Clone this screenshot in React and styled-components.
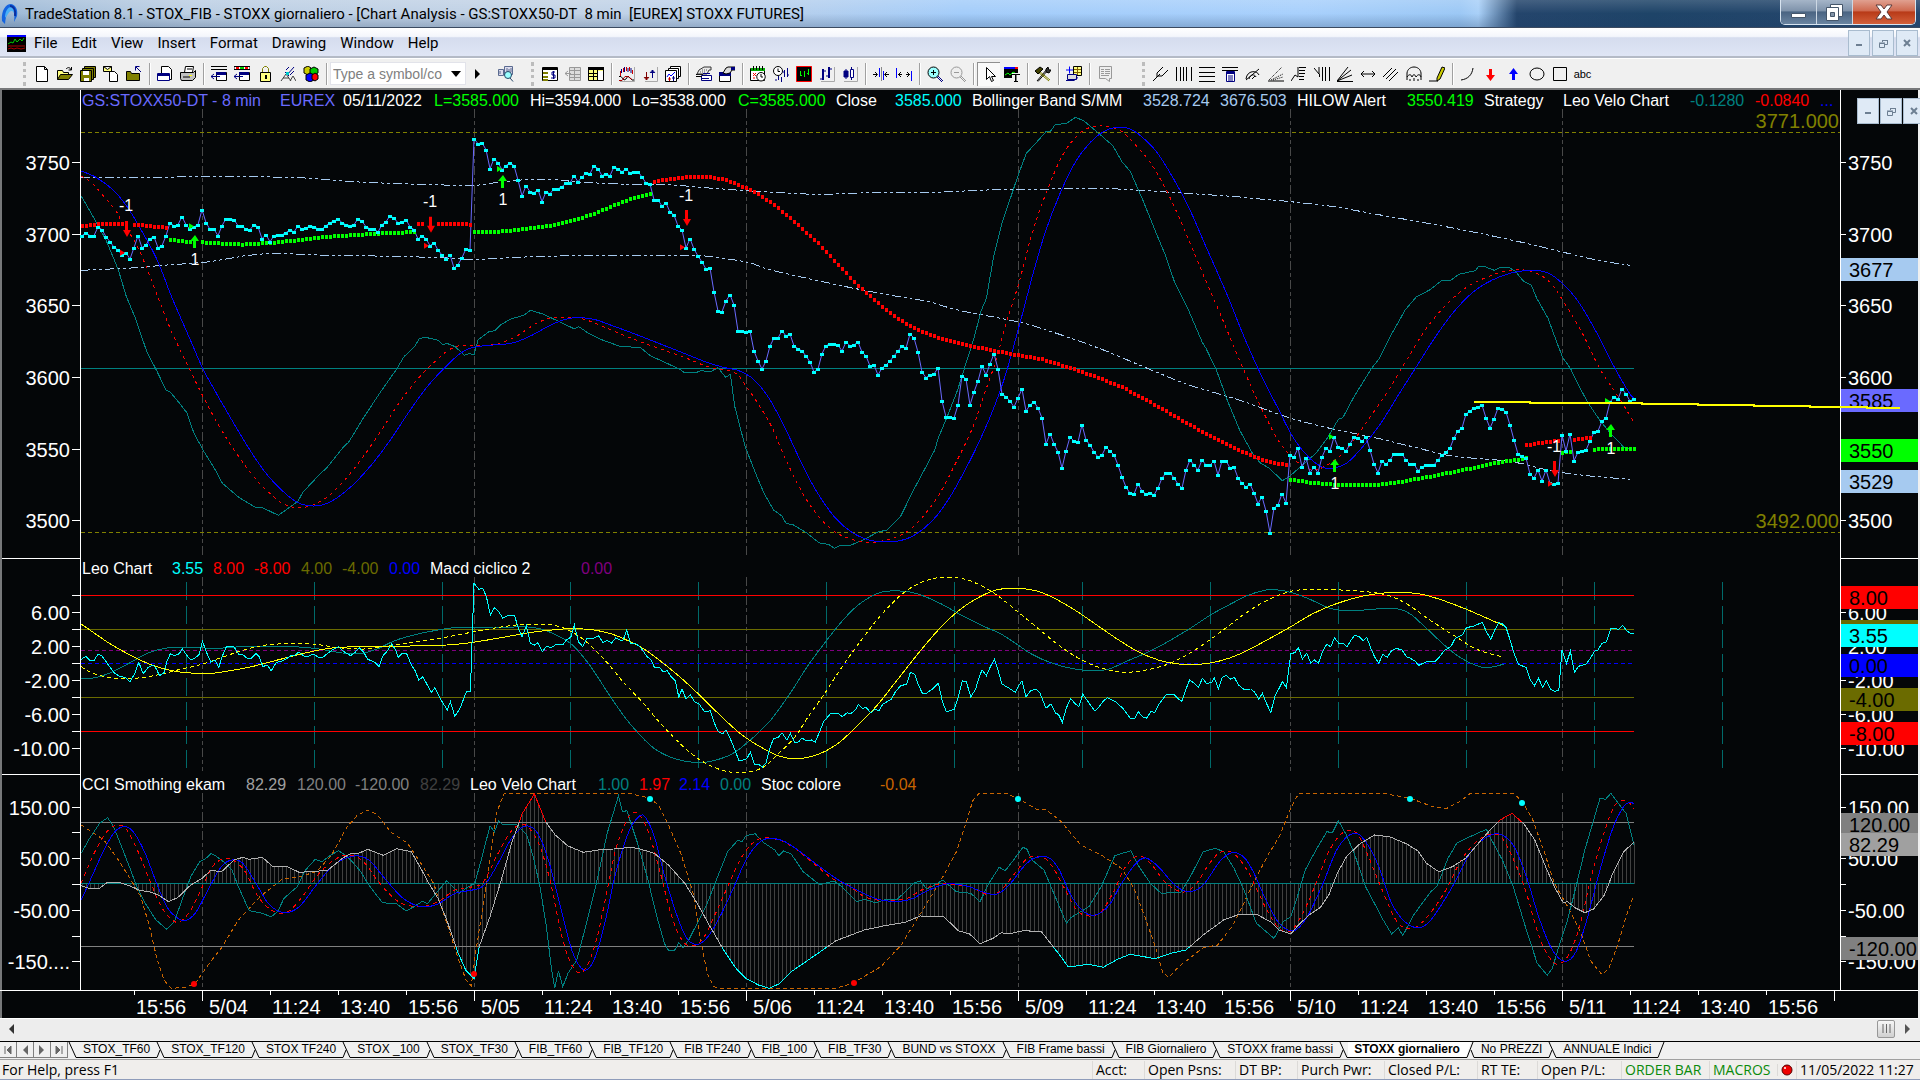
import React from 'react';
import styled, { createGlobalStyle } from 'styled-components';

/* ---------- data ---------- */

// one sample per bar, three units per pixel, counted from the top of the price pane
const CLOSE = [
  437, 428, 437, 437, 411, 419, 440, 455, 472, 480, 495, 488, 507, 473, 437, 473, 464, 446, 440, 473,
  467, 437, 398, 408, 404, 380, 404, 418, 411, 404, 359, 398, 418, 418, 437, 407, 386, 386, 389, 407,
  407, 418, 419, 404, 410, 446, 434, 455, 437, 434, 434, 428, 419, 426, 407, 417, 415, 407, 410, 417,
  417, 407, 398, 394, 386, 398, 404, 407, 404, 386, 394, 410, 416, 417, 426, 404, 395, 377, 385, 398,
  397, 389, 410, 419, 447, 437, 446, 467, 458, 480, 495, 507, 494, 534, 524, 503, 476, 480, 146, 161,
  158, 179, 236, 206, 218, 239, 227, 218, 227, 270, 318, 287, 305, 308, 299, 335, 305, 311, 296, 296,
  290, 279, 279, 257, 275, 261, 248, 251, 227, 236, 257, 251, 257, 230, 237, 245, 237, 248, 245, 245,
  261, 279, 282, 329, 330, 348, 339, 366, 375, 408, 420, 474, 446, 477, 498, 516, 537, 534, 606, 663,
  665, 633, 614, 645, 723, 723, 726, 723, 783, 813, 837, 813, 768, 744, 744, 722, 738, 732, 768, 776,
  783, 798, 816, 846, 837, 791, 767, 762, 762, 765, 783, 756, 767, 765, 756, 786, 798, 828, 825, 855,
  834, 825, 813, 798, 783, 768, 774, 732, 744, 786, 846, 863, 855, 852, 834, 933, 981, 981, 984, 945,
  857, 867, 945, 906, 873, 828, 855, 822, 791, 837, 912, 920, 933, 951, 924, 897, 963, 945, 936, 954,
  984, 1062, 1031, 1062, 1086, 1134, 1083, 1041, 1053, 1056, 1004, 1050, 1065, 1086, 1101, 1095, 1071, 1083, 1095, 1125,
  1161, 1191, 1210, 1212, 1182, 1203, 1212, 1209, 1215, 1194, 1164, 1149, 1149, 1164, 1182, 1194, 1140, 1110, 1125, 1140,
  1110, 1125, 1125, 1113, 1155, 1112, 1112, 1134, 1131, 1164, 1179, 1191, 1182, 1209, 1241, 1220, 1263, 1329, 1254, 1245,
  1211, 1239, 1095, 1101, 1074, 1131, 1104, 1148, 1131, 1148, 1101, 1074, 1083, 1041, 1071, 1074, 1083, 1062, 1041, 1044,
  1053, 1041, 1080, 1122, 1148, 1113, 1122, 1110, 1092, 1092, 1092, 1110, 1122, 1122, 1142, 1131, 1125, 1125, 1125, 1110,
  1095, 1086, 1074, 1044, 1022, 1014, 972, 963, 954, 951, 945, 984, 1014, 987, 954, 957, 966, 1005, 1050, 1092,
  1098, 1104, 1152, 1164, 1140, 1173, 1140, 1179, 1182, 1179, 1035, 1083, 1032, 1112, 1086, 1083, 1080, 1053, 1026, 1023,
  993, 984, 936, 921, 927, 896, 912, 933, 927,
];

// "bar,level" pairs
const VELO_SLOW = '-0.2,243 3.5,262 7.6,298 11.1,347 14.7,418 18.8,510 22.4,620 26.9,745 30.3,838 33.6,910 37.7,995 41.7,1075 45.8,1147 49.9,1200 53.5,1235 56.5,1247 60.1,1245 63.7,1224 67.8,1184 72.4,1124 76.9,1053 81.5,970 86.1,893 90.7,833 94.3,793 97.4,773 101.9,766 107.6,759 112.1,738 116.7,708 120.8,688 123.9,683 128,688 132.6,707 140,740 150.5,790 156.9,820 161.1,834 164.2,842 167.9,868 171.6,922 175.8,1015 180.5,1135 184.2,1215 188.4,1285 192.6,1328 196.8,1350 200,1355 203.7,1354 207.9,1337 212.6,1292 216.8,1225 221,1135 224.7,1045 227.9,955 231,850 234.7,690 237.9,545 241,420 244.7,305 248.4,215 252.1,157 255.2,126 258.4,112 261.6,115 264.2,133 268.4,182 272.6,260 276.8,355 281,470 286.3,615 290.5,740 294.5,848 299,955 302.9,1045 306.8,1103 310.2,1132 313,1134 316.3,1118 320.2,1070 324.7,1000 329.1,915 333.6,830 338.1,745 342.5,672 347.6,608 352.6,570 357.6,548 362.6,541 366.5,549 369.9,578 373.8,630 378.3,720 382.7,823 386.6,905 388,925';
const VELO_MID = '-0.2,258 2.5,280 5.5,320 8.6,365 10.1,400 13.2,455 15.7,520 18.8,615 22.4,725 26.4,825 30.5,925 34.6,1015 39.2,1100 43.8,1172 47.9,1220 50.9,1245 54.5,1253 58.1,1243 61.6,1218 65.7,1170 70.3,1100 74.9,1020 79.5,935 84.1,865 88.2,815 91.7,780 94.8,766 98.9,767 101.9,766 105.5,755 109.1,735 113.2,703 116.7,686 120.8,682 124.9,686 129,703 133.6,727 140,757 150.5,802 156.9,832 163.2,848 165.8,885 169.5,950 172.6,1015 175.8,1105 179.5,1195 183.2,1265 187.4,1318 191.6,1345 196.8,1358 201,1350 205.3,1332 209.5,1290 214.2,1215 218.4,1120 222.6,1015 225.2,925 228.4,815 231,700 234.2,580 237.3,440 241,310 245.2,195 249.4,130 253.1,109 256.3,109 260,125 263.6,168 267.3,222 271.5,310 275.8,425 280,545 284.5,670 287.8,765 292.3,890 295.7,975 299,1050 302.4,1100 305.7,1132 308.5,1139 311.3,1125 314.6,1097 318,1050 322.4,975 326.9,895 331.4,805 336.4,710 341.4,640 346.4,590 351.5,560 355.9,543 360.4,540 363.7,550 367.1,578 370.4,635 374.9,725 379.4,835 383.8,915 388,997';
const VELO_FAST = '-0.2,318 3.5,395 6,450 9.1,540 11.1,620 13.2,680 16.2,785 18.8,845 21,900 22,905 24.4,940 26.2,968 28,1030 30.5,1085 33.1,1135 35.1,1180 39.2,1222 43.3,1252 45.3,1254 49.1,1276 54,1234 55.2,1207 59.1,1157 61.3,1132 65.2,1073 66.7,1056 70.3,985 74.4,910 78.5,840 80.5,800 83.1,770 84.3,747 85.6,741 89,751 90.2,765 91.2,760 93.3,770 95.6,796 96.8,791 98,794 99,750 101.6,726 103.2,722 104.5,706 107,688 110.6,675 112.1,661 115.2,672 118.8,692 123,716 124.2,710 126.9,732 130.5,752 134.8,770 139.5,772 142.1,797 144.8,812 149.5,838 150.5,847 153.2,849 154.8,842 157.1,845 159,833 160.9,862 162.1,853 163.2,950 165.8,1070 168.4,1150 170.5,1210 172.9,1260 175,1278 176,1300 177.9,1305 181.1,1328 184.2,1358 186.8,1364 188.1,1375 189.5,1366 192.1,1366 195.3,1350 199,1326 201.3,1320 204.7,1278 207.9,1200 211,1130 213.1,1082 214.2,1040 216.3,980 218.9,900 221,820 223.1,740 224.7,665 226.1,625 227.9,500 230,400 232.1,325 234.2,250 236.1,190 238.4,160 241,125 242.1,124 243.3,104 246.1,100 248.4,82 250.5,93 253.7,125 257.7,167 260,215 262.1,245 265.2,330 268.4,425 271,500 273.1,575 276.8,665 280,755 281,775 283.6,840 286.3,930 289.4,1020 292.6,1090 294.5,1118 296.8,1135 300.1,1172 302.1,1157 305.1,1125 308.5,1090 311.3,1045 314.1,988 315.2,983 318,920 322.4,835 324.2,808 327.5,730 330.8,660 333.6,620 336.9,600 340,571 342.2,571 344.2,553 348.3,542 349.2,529 350.9,531 353.1,541 354.6,532 356.8,533 358.5,545 360.2,572 362.3,585 363.7,625 366.5,685 368.8,760 370.2,803 372.1,835 374.3,890 376.6,940 379.4,990 382.7,1038 385.5,1072 387,1076';
const BAND_UP = '-0.2,262 20.3,262 30,259 54,263 69.3,276 87.7,284 97.9,286 103.5,278 112.1,268 118.3,269 125.4,277 139.5,284 147.4,285 155.8,293 166.3,302 183.2,313 194.7,309 212.6,307 226.3,300 239,298 247.3,295 258.9,297 274.7,309 287.3,319 294.5,327 301.2,334 312.4,349 323.6,373 337,401 348.1,427 360.4,458 370.4,487 379.4,512 387,526';
const BAND_DOWN = '-0.2,541 12.2,534 20.3,526 30.5,517 36.6,506 41.7,496 48.9,490 59.1,495 77.5,499 89.7,503 97.9,508 107.1,503 115.2,499 125.4,497 139.5,496 148.4,496 155.8,498 163.2,510 167.4,520 171.6,538 182.1,567 192.6,594 203.2,618 211.6,635 218.9,660 230.5,687 236.8,704 247.3,745 255.8,782 266.3,835 276.8,885 285.2,915 291.2,938 301.2,981 311.3,1013 323.6,1044 333.6,1073 342.5,1098 353.7,1110 360.4,1122 367.1,1142 377.1,1158 387,1168';

const HILOW = [
  ['#f00', '0,408 5,402 10,402'],
  ['#f00', '13,404 21,413'],
  ['#0f0', '22,449 27,456'],
  ['#0f0', '30,457 35,461 40,464 44,461 49,457 55,449 61,441 67,436 73,431 83,426'],
  ['#f00', '84,402 85,402'],
  ['#f00', '89,402 96,402 97,405'],
  ['#0f0', '98,426 104,425 110,418 117,408 122,393 127,376 132,351 137,328 142,311'],
  ['#f00', '143,275 147,267 152,261 157,261 161,270 166,295 169,312 173,345 178,395 184,460 189,525 194,588 199,640 204,688 209,720 215,748 221,765 227,780 233,794 240,808 247,834 254,863 260,892 267,937 274,985 281,1032 288,1075 295,1110 301,1126'],
  ['#0f0', '302,1169 307,1178 313,1184 319,1186 324,1185 329,1177 336,1162 345,1141 352,1122 361,1105'],
  ['#f00', '361,1066 364,1060 369,1053'],
  ['#f00', '373,1049 377,1043'],
  ['#0f0', '370,1088 372,1085'],
  ['#0f0', '378,1079 383,1076 388,1076'],
];

const LEO = '-0.2,328 1,319 2,332 3,332 4,312 5,318 6.6,345 8,368 9.3,378 11,383 12,396 13.2,370 14.2,337 15.3,371 16.4,354 17.7,345 18.5,355 19.4,377 20.5,368 21.3,332 22.1,311 23.2,317 24.3,311 25.1,297 26.2,316 27.2,330 28.5,322 29.3,313 30.1,274 31.2,309 32.2,336 33.2,330 34.2,352 35.1,318 36.1,290 38,290 39.1,312 40.2,314 41.3,325 42.4,324 43.5,310 44.3,320 45.2,350 46.3,345 47.3,362 48.6,337 49.8,334 51,327 52.1,318 53.1,317 54.2,306 55.4,318 56.7,319 57.8,312 59,321 60.3,321 61.4,310 62.8,298 64.2,290 65.1,302 66.2,310 67.1,317 68.2,308 69.3,293 70.4,306 71.4,328 72.5,333 73.4,339 74.3,350 75.2,318 76.3,303 77.4,281 78.4,300 79,322 80.1,310 81.2,312 82.3,344 83.3,362 84.2,391 85.2,380 86.3,404 87.3,428 88.2,413 89.3,440 90.2,458 91.3,480 92.1,455 93.2,499 94.4,478 95.3,450 96.1,425 97.1,424 98,100 99.2,118 100.2,115 101.1,140 102.1,195 103.1,173 104.2,185 105.2,205 106.3,197 108.1,196 109.1,235 110,260 111.1,228 112.1,280 113.1,285 114,278 115.1,305 116.2,288 117.2,294 118.3,285 120.2,284 121.1,270 122.2,262 123.1,225 124.1,275 125.2,290 126.2,265 128.1,264 129.1,257 130.2,277 131.3,272 132.4,279 133.4,264 134.5,270 135.2,272 136.2,240 137.1,280 138.3,280 139.5,290 141.3,320 142.3,330 143.1,352 144.3,352 145.3,365 146.3,362 147.4,382 148.3,392 149.2,441 150,417 151,447 152.1,434 153.1,455 154.3,462 155.6,485 157.1,482 158.1,520 159.1,545 160.2,551 161,540 162.2,570 163.4,605 164.2,631 165.2,630 166.2,626 167.1,606 168.1,642 169.1,643 170.1,651 171,638 171.8,600 172.9,565 174,563 175,548 176.2,570 177.1,550 178.2,578 179.1,576 180,564 181,572 182.4,570 183.3,577 184.4,545 185.4,515 187.2,490 189.2,492 190.1,500 191.3,488 192.2,491 193.3,480 194.1,464 195.1,475 196.1,473 197.2,489 198.3,477 199.2,483 200.2,463 202.3,448 203.3,427 204.6,408 206.2,402 207.1,367 208.2,373 209.1,405 210.1,430 211.1,430 212.5,418 214.1,400 215.1,455 216.1,485 218.1,478 219.1,440 220.1,392 221.1,396 222.2,440 223.4,418 224.2,385 225,360 226.1,377 227.1,350 228.1,328 229,360 230,402 231.8,415 233.3,427 234,410 235,392 236,440 237.2,422 238.5,418 239.5,430 241,475 242.2,462 243.4,490 244.1,493 245.1,517 246.1,473 247.2,446 248.2,460 249.2,470 250.2,432 251.2,450 252.3,468 253.2,483 254.2,472 255.2,455 256.3,443 258.4,455 260.2,475 262.2,507 263.2,505 264.1,485 265.1,500 266.1,505 267.2,485 268.2,487 269.2,463 271.1,433 273,433 274,446 275,454 276,417 276.9,390 278,399 279.1,412 280.1,385 281.1,400 282.4,398 283.1,384 284.1,416 285.1,382 286,376 287.2,388 288.1,382 289.1,405 290.5,418 292.2,417 293.2,427 294.2,448 295.1,430 296.1,460 297.2,487 298.2,440 300.1,395 301.1,413 302.2,311 303.2,308 304.1,293 305.1,327 306.2,310 307.2,340 308.1,330 309.1,340 310.1,305 311.2,283 312.2,290 313.1,263 314.2,280 315.3,280 316.2,291 317.3,270 318.2,256 319.3,260 320.3,272 321.2,262 322.2,295 323.2,322 324.2,340 325.2,313 326.3,322 327.4,302 328.5,295 330,300 331.1,320 332.1,325 333.2,333 334.2,346 336.1,335 338.2,335 339.4,320 340.5,302 342.2,290 343.3,265 345.1,255 346.1,233 348,228 350.1,217 351.1,245 352.2,268 353.2,240 354.2,217 355.1,222 356,232 356.9,265 358,310 359.1,343 361.1,353 362.1,390 363.1,407 364.1,385 365.2,412 366.1,392 367.1,417 368.1,424 369.2,421 370,300 371.1,340 372.1,304 373.1,367 374.1,349 376,343 377.1,325 378.2,303 379,300 380,280 381.1,276 382.2,235 383.2,234 384.1,239 385.1,226 386.2,242 387.1,250 388,250';
const MACD_SLOW = '-0.2,222 2.8,247 6.6,278 12,315 17.4,345 22.9,363 27.2,369 31.5,371 37,362 42.4,350 48.9,330 55.4,310 61.9,295 68.4,290 77.1,289 91.2,285 97.7,277 105.3,262 111.8,248 118.3,239 122.6,236 128,240 132.4,252 136.7,273 140.5,297 144.6,333 149.7,383 154.8,440 159.9,500 165,555 170.1,594 174.2,618 178.8,626 183.4,616 188.5,585 193.6,530 198.7,467 203.8,390 209.9,298 215,228 220.1,173 225.2,136 229.3,118 234.4,115 239,124 243.6,148 248.7,184 253.8,226 258.9,268 264,305 269.1,330 274.2,342 279.3,343 284.4,333 289.5,312 295,278 302.2,230 307.9,190 313.4,162 319.9,139 327.4,127 334,131 339.4,148 345.9,177 351.3,205 356,230';
const MACD_MID = '-0.2,350 2.8,370 7.7,384 13.1,385 18.5,376 23.9,360 29.9,343 34.8,323 40.2,301 45.6,286 51,281 57.6,282 64.1,293 70.6,297 77.1,287 83.6,276 91.2,261 97.7,246 104.2,232 109.6,224 116.1,223 120.4,234 124.8,263 128,297 131.3,338 135.6,400 140,455 144.6,520 149.7,583 154.8,632 159.9,660 165,668 170.1,653 174.2,610 178.3,560 181.3,505 185.4,435 189.5,360 193.6,290 197.7,225 201.7,170 205.8,125 209.9,97 214,83 219.1,84 223.2,98 228.3,132 233.4,180 239.5,240 245.6,298 251.7,340 256.8,360 260.9,367 266,360 271.1,344 276.2,315 281.3,275 286.4,230 290.5,193 294.9,160 299.3,135 303.6,121 309,118 317.7,122 324.2,130 328.5,145 332.9,175 337.2,212 343.7,262 349.1,300 355.6,322';
const MACD_FAST = '-0.2,385 3.4,383 7.7,365 12,338 16.4,310 20.7,295 26.1,292 33.7,295 40.2,290 50,289 55.4,292 59.7,298 65.1,309 69.5,311 73.8,297 78.2,272 83.6,253 90.1,238 94.4,232 103.1,234 110.7,230 115,238 119.4,260 122.6,285 126.9,345 131.3,425 135.6,500 139.7,558 143.6,600 148.7,628 153.8,638 157.9,632 162.5,612 167.1,570 172.2,510 177.3,425 181.3,350 185.9,275 190.5,207 194.6,160 199.7,127 205.8,124 209.9,136 215,163 220.1,197 225.2,228 229.3,249 233.4,280 237.5,313 242.6,340 247.7,356 252.8,362 256.8,357 260.9,335 267.1,303 272.2,270 277.3,233 282.4,193 287.5,160 291.5,136 295.6,121 298.5,119 302.5,128 306.8,147 312.3,176 317.7,182 327.4,175 331.8,190 336.1,235 341.5,295 345.9,332 350.8,353 355.6,342';

const CCI = '-0.2,1007 1.7,1015 4.2,1016 6.1,999 9.3,997 12,1008 14.2,1020 17.4,1027 19.4,1037 21.6,1055 23.9,1043 27.2,1005 30.1,984 32.1,962 35,964 38,930 40.2,922 41.8,928 45.1,922 47.8,951 51,948 54.3,967 57,965 61.4,961 65.1,925 67.1,911 69.3,909 71.4,898 75.3,916 78.7,896 82.3,905 84.7,955 86.8,1002 89,1045 91.2,1110 93.9,1205 96,1262 98,1286 99.3,1190 102,1100 104.7,995 107.4,880 110.1,790 113.1,732 115.9,815 118.3,855 121.5,888 125.3,907 129.1,900 132.9,897 137.2,892 139.5,897 143.1,910 146.6,945 150.7,1000 153.8,1060 156.8,1125 160.4,1200 163.5,1255 166,1285 169.1,1305 171.8,1315 174.2,1302 177.3,1265 183.4,1215 188.5,1172 195.6,1140 200.7,1127 205.8,1117 209.6,1098 215.5,1101 219.1,1142 221.9,1152 224.5,1181 227.8,1165 229.8,1148 231.8,1152 234.9,1143 236.4,1141 237.5,1146 239.7,1143 242.6,1187 244.6,1218 246.6,1251 251.7,1243 255.3,1252 258.9,1228 262,1213 268.3,1226 272.2,1210 276,1200 280.3,1155 285.4,1110 289.5,1092 293.8,1094 297.1,1115 299.3,1140 302.2,1152 304.1,1125 306.8,1095 309.6,1072 311.7,1035 313.9,968 316.1,920 319.3,883 323.1,855 326.9,860 331.2,882 334,903 336.1,940 339.2,965 342.6,950 345.9,925 349.1,880 352.4,835 354.5,810 357.5,790 360.5,822 363.2,870 365.9,950 368.1,1010 370.3,1058 371.4,1055 373.5,1075 375.7,1088 377.9,1077 380.6,1035 382.7,970 385.4,905 388,877';
const CYCLE_FAST = '-0.2,910 1.9,865 4.4,820 6.4,803 7.9,830 9.9,890 12,955 13.7,1010 15.8,1060 18.5,1110 21.2,1138 23.1,1115 25,1050 27.2,980 29.4,935 31,925 32.3,910 33.7,920 35.9,940 37.5,960 39.1,1010 41.8,1082 44.5,1088 47.3,1100 48.9,1085 50.5,1045 53.8,1010 55.9,960 58.3,928 60,935 61.9,918 64.1,902 66.2,918 67.9,940 69.5,962 71.7,1005 75.1,1058 78.7,1062 81,1083 83,1070 85.2,1053 86.3,1062 88.5,1030 91.2,992 94.4,1030 96.6,1010 98.2,1000 99.8,930 102,828 103.1,845 104.2,812 105.3,825 108.5,822 111.2,855 112.8,920 114.5,1010 116.1,1130 117.4,1260 118.2,1315 119.1,1262 120.2,1310 121.5,1270 123.7,1230 125.9,1130 128.6,1000 131.3,850 134.1,738 135.1,785 136.2,782 138.9,880 141.5,990 143.6,1095 145.6,1180 146.6,1201 148.2,1200 149.2,1178 150.2,1193 151.7,1170 153.8,1120 156.3,1060 158.9,980 161.4,905 164,870 165,875 166,857 168.3,851 170.1,875 173.2,900 174.2,917 175.4,903 177.3,912 180.3,965 184.4,1004 188,993 190,1010 193.6,1055 195.6,1048 198.4,1058 200.7,1049 203.8,1048 205.8,1025 207.9,1000 209.6,993 211.2,1017 213.5,1003 215.2,990 218.6,1025 222.2,1030 224.5,1055 226.7,1000 229.3,952 230.8,962 232.9,930 235.2,892 236.2,897 237.5,930 240.5,960 242.6,1020 246.1,1120 247.2,1103 251.7,1070 254.8,1010 258.2,917 262.2,902 264,945 267.1,1000 269.9,1031 272.2,1027 274.7,1028 277.3,975 280.3,905 283.4,895 285.4,905 288,955 290.5,1020 293.6,1120 298,1165 300.3,1115 302.2,1100 303.6,1050 305.8,960 308.5,900 311.2,845 312.6,848 314.1,812 316.1,855 318.2,915 320.9,1010 323.1,1060 325.3,1110 327.4,1152 329.1,1133 330.2,1157 332.9,1095 337.2,1025 338.8,1008 341.5,925 343.7,880 347,860 351.1,838 352.4,870 355.1,930 357.8,1010 361.1,1140 363.8,1240 366.3,1276 367.6,1255 369.2,1190 371.4,1110 373.5,1010 375.7,900 377.9,810 379.5,745 380.9,748 382.2,730 383.8,755 386,790 388,885';
const CYCLE_MID = '-0.2,1000 1.7,945 3.9,890 6.6,840 9.3,825 11.5,845 14.2,910 16.9,990 19.6,1065 22.3,1108 24.5,1115 27.2,1080 29.9,1015 32.6,950 35.3,927 38,932 40.8,965 43.5,1030 46.2,1070 49.4,1090 52.1,1080 55.4,1035 58.6,980 61.9,940 65.1,918 68.4,919 71.1,945 73.8,990 77.1,1035 80.3,1062 84.7,1070 89,1055 93.3,1020 97.7,1010 100.4,995 103.6,920 106.9,850 109.6,823 111.8,835 114.5,890 117.2,1000 119.4,1130 121.5,1220 123.7,1265 125.9,1255 128.6,1170 131.3,1020 133.4,900 136.2,810 138,787 140,805 142,860 144.6,970 147.2,1090 149.7,1165 152.3,1188 155.3,1165 158.4,1090 161.4,1010 164.5,930 167.6,880 170.6,864 174.7,872 178.8,900 183.4,945 187.5,985 191.5,1005 195.6,1040 199.7,1051 205.8,1047 209.9,1020 214,1003 218.1,1004 222.2,1012 226.2,1033 229.3,1025 232.9,975 236.4,925 240,921 242.6,950 245.6,1015 248.7,1080 251.7,1098 254.8,1085 257.9,1025 260.9,950 264,918 267.1,940 271.1,1000 275.2,1026 278.3,1005 281.9,940 284.9,905 288,912 291.5,965 296,1075 299.3,1135 302.2,1143 305.2,1090 308.5,1000 311.7,905 315,850 318.2,845 320.9,900 324.7,1010 328.5,1110 331.8,1137 335.6,1110 340.5,1030 344.8,930 349.1,870 352.4,853 355.1,865 358.3,940 361.1,1030 364.3,1160 367,1225 369.2,1242 371.9,1210 374.6,1120 377.3,980 380.6,845 383.3,765 386,752 388,775';
const CYCLE_SLOW = '-0.2,1050 1.7,1000 5.5,900 8.2,845 10.9,830 13.1,850 15.8,910 18.5,995 21.2,1070 23.4,1100 25.6,1112 28.3,1090 31.5,1020 34.8,950 37.5,930 40.2,940 43.5,1000 46.7,1062 50.5,1088 54.3,1070 58.6,1005 63,945 67.9,918 71.7,930 76,990 80.3,1045 84.7,1070 89,1062 93.3,1030 99.8,1012 103.1,960 107.4,865 110.9,828 113.9,850 116.6,930 119.4,1060 122.6,1205 125.5,1260 128,1230 130.7,1120 133.4,970 136.7,845 139.4,798 141,805 143.1,860 145.6,975 148.7,1095 151.2,1165 154,1183 156.8,1155 159.9,1090 163,1010 166,930 169.1,880 171.8,865 175.7,875 180.3,912 184.4,950 189.5,993 194.6,1025 199.7,1050 206.3,1051 210.9,1025 216,1002 221.1,1008 226.2,1030 228.8,1032 231.8,1005 235.4,950 238,925 241.5,922 244.1,955 247.2,1035 250.2,1083 253.3,1095 256.8,1065 259.9,1000 263.5,940 266,924 269.1,950 273.2,1005 276.7,1025 280.3,1005 284.4,935 287.5,908 290.5,922 292.8,965 296,1050 299.3,1120 303,1142 306.3,1100 310.1,1005 313.9,895 317.9,850 320.9,875 324.2,950 327.4,1060 330.7,1115 334,1133 337.2,1110 342.6,1010 347,910 351.3,860 354.5,853 357.8,885 361.1,980 364.3,1105 367.6,1200 370.8,1234 373.5,1205 376.2,1110 379.5,960 382.7,835 385.4,770 387,757 388,762';
const STOC = '-0.2,825 2.3,845 5.5,870 8.8,925 12,985 14.7,1040 16.9,1130 18.7,1225 20.5,1290 22.3,1315 26.1,1312 28.3,1300 31.5,1245 34.8,1195 39.1,1110 44.5,1040 50,988 54.3,980 58.6,965 62.4,915 66.2,832 68.9,795 71.4,781 73.8,793 77.1,845 81.4,880 84.7,940 87.9,1000 91.2,1120 93.9,1220 96,1290 97.3,1308 98.5,1200 100.4,1060 102,930 103.6,790 105.5,731 137.2,731 142,745 144.1,765 146.6,825 149.7,910 152.8,1030 154.8,1180 156.3,1270 157.9,1310 159.4,1315 188.5,1315 192.6,1300 199.7,1250 204.8,1185 209.9,1085 215,985 218.6,905 221.1,815 222.7,752 224.2,731 231.3,731 234.4,748 238.5,777 241,779 244.6,812 249.7,885 254.8,915 259.9,955 263,1015 266,1110 268.6,1200 270.1,1265 271.6,1283 274.2,1250 280.3,1193 283.9,1185 287.5,1130 290.5,1058 292.8,1000 296.5,915 299.3,860 302.2,775 304.1,731 325.8,731 332.1,745 337.2,768 341,776 344.2,757 347,731 357.8,731 360,752 362.7,810 365.4,900 368.1,1000 371.9,1080 374.6,1145 377.3,1235 380,1274 381.7,1255 383.8,1190 386,1100 388,1035';

const DAYS = [30, 98, 166, 234, 302, 370];
const LAST_BAR = 388;

const HEADER = [
  ['GS:STOXX50-DT - 8 min', '#6a6aff', 198],
  ['EUREX', '#6a6aff', 63],
  ['05/11/2022', '#fff', 91],
  ['L=3585.000', '#0f0', 96],
  ['Hi=3594.000', '#fff', 102],
  ['Lo=3538.000', '#fff', 106],
  ['C=3585.000', '#0f0', 98],
  ['Close', '#fff', 59],
  ['3585.000', '#0ff', 77],
  ['Bollinger Band S/MM', '#fff', 171],
  ['3528.724', '#a6caf0', 77],
  ['3676.503', '#a6caf0', 77],
  ['HILOW Alert', '#fff', 110],
  ['3550.419', '#0f0', 77],
  ['Strategy', '#fff', 79],
  ['Leo Velo Chart', '#fff', 127],
  ['-0.1280', '#008080', 65],
  ['-0.0840', '#f00', 65],
  ['...', '#00f', 14],
];
const LEO_HEADER = [
  ['Leo Chart', '#fff', 90],
  ['3.55', '#0ff', 41],
  ['8.00', '#f00', 41],
  ['-8.00', '#f00', 47],
  ['4.00', '#6b6b00', 41],
  ['-4.00', '#6b6b00', 47],
  ['0.00', '#00f', 41],
  ['Macd ciclico 2', '#fff', 151],
  ['0.00', '#800080', 40],
];
const CCI_HEADER = [
  ['CCI Smothing ekam', '#fff', 164],
  ['82.29', '#a0a0a0', 51],
  ['120.00', '#808080', 58],
  ['-120.00', '#808080', 65],
  ['82.29', '#404040', 50],
  ['Leo Velo Chart', '#fff', 128],
  ['1.00', '#008080', 41],
  ['1.97', '#f00', 40],
  ['2.14', '#00f', 41],
  ['0.00', '#008080', 41],
  ['Stoc colore', '#fff', 119],
  ['-0.04', '#c86400', 50],
];

const PRICE_TICKS = [[217, '3750'], [433, '3700'], [647, '3650'], [862, '3600'], [1078, '3550'], [1291, '3500']];
const PRICE_TAGS = [
  [504, '3677', '#a6caf0'],
  [897, '3585', '#6a6aff'],
  [1047, '3550', '#0f0'],
  [1140, '3529', '#a6caf0'],
];
const LEO_TICKS = [[136], [187, '6.00'], [238], [289, '2.00'], [340], [391, '-2.00'], [442], [493, '-6.00'], [544], [595, '-10.00']];
// the 4.00 tag is almost hidden by 3.55, only its edge shows
const LEO_TAGS = [
  [108, '8.00', '#f00'],
  [210, '', '#6b6b00'],
  [222, '3.55', '#0ff'],
  [312, '0.00', '#00f'],
  [414, '-4.00', '#6b6b00'],
  [516, '-8.00', '#f00'],
];
const CCI_TICKS = [[772, '150.00'], [848], [925, '50.00'], [1003], [1081, '-50.00'], [1159], [1235, '-150.00']];
const CCI_TAGS = [
  [790, '120.00', '#808080'],
  [849, '82.29', '#a0a0a0'],
  [1161, '-120.00', '#808080'],
];

const TIMES = ['15:56', '5/04', '11:24', '13:40', '15:56', '5/05', '11:24', '13:40', '15:56', '5/06', '11:24', '13:40', '15:56', '5/09',
  '11:24', '13:40', '15:56', '5/10', '11:24', '13:40', '15:56', '5/11', '11:24', '13:40', '15:56', ''];

const MENUS = ['File', 'Edit', 'View', 'Insert', 'Format', 'Drawing', 'Window', 'Help'];
const TABS = ['STOX_TF60', 'STOX_TF120', 'STOX TF240', 'STOX _100', 'STOX_TF30', 'FIB_TF60', 'FIB_TF120', 'FIB TF240', 'FIB_100',
  'FIB_TF30', 'BUND vs STOXX', 'FIB Frame bassi', 'FIB Giornaliero', 'STOXX frame bassi', 'STOXX giornaliero', 'No PREZZI', 'ANNUALE Indici'];
const STATUS = [['Acct:', 52], ['Open Psns:', 91], ['DT BP:', 62], ['Purch Pwr:', 87], ['Closed P/L:', 93], ['RT TE:', 60], ['Open P/L:', 84]];

/* ---------- icons, 16x16: [path, stroke, fill] ---------- */

const N = 'none';
const ICONS = {
  page: [['M2.500 .5h8l3 3v12h-11zM10.500 .5v3h3', '#000', '#fff']],
  open: [['M.5 13.500v-9h5l1 2h5v2', '#000', '#ffff80'], ['M.5 13.500l3-5h12l-4 5z', '#000', '#808000'], ['M9 3c2-2 4-2 5 1M14.500 1v3h-3', '#000', N]],
  saveAll: [['M4.500 .5h11v11h-11z', '#000', '#808000'], ['M2.500 2.500h11v11h-11z', '#000', '#808000'], ['M.5 4.500h11v11H.5z', '#000', '#808000'], ['M3 5h6v4H3zM4 12h5v3H4z', N, '#fff']],
  mail: [['M.5 .5h8v5h-8zM.5 .5l4 3 4-3', '#000', '#ffff80'], ['M6.500 5.500h5l3 3v7h-8z', '#000', '#fff']],
  folder: [['M.5 14.500v-9h4l1 2h8v7z', '#000', '#808000'], ['M10 1l5 5M13.500 .5h-4v4', '#000080', N]],
  preview: [['M4.500 .5h7l3 3v10h-10z', '#000', '#fff'], ['M.5 7.500h12v7H.5z', '#000080', '#fff'], ['M1 8h11v2H1z', N, '#000080']],
  print: [['M4.500 6.500l1-6h8l-1 6', '#000', '#fff'], ['M.5 6.500h13l2-2v7l-3 3H1.500l-1-2z', '#000', '#c0c0c0'], ['M7 3h5M3 11h7', '#000', N], ['M9 9h3v1H9z', N, '#ffff00']],
  dataIn: [['M0 .5h16M0 3.500h16', '#000', N], ['M5.500 6.500h10v8h-10z', '#000', '#fff'], ['M5 6h10v3H5z', N, '#000080'], ['M0 10.500h9M3 8l-3 2.500 3 2.500', '#000080', N]],
  dataOut: [['M0 .5h16v3H0z', '#000', '#fff'], ['M2 1h3v2H2z', N, '#f00'], ['M6 1h4v2H6z', N, '#0c0'], ['M11 1h3v2h-3z', N, '#f00'], ['M5.500 6.500h10v8h-10z', '#000', '#fff'], ['M5 6h10v3H5z', N, '#000080'], ['M0 10.500h9M3 8l-3 2.500 3 2.500', '#000080', N]],
  lock: [['M5.500 7.500v-5l2-2h2l2 2v5', '#808000', N], ['M3.500 6.500h10v9h-10z', '#000', '#ffff80'], ['M8 9h2v4H8z', N, '#000']],
  dish: [['M1 15l5-7 5 7M3 12h6M10 15l3-5 3 5', '#404040', N], ['M7 9l7-8M5 6l4 4M9 1l-3 3M14 5l-4 4', '#000080', N], ['M6 6h3v3H6z', N, '#0cc']],
  cubes: [['M1 2l4-2 3 2v5l-3 2-4-2z', '#000', '#cc0'], ['M7 3l4-2 4 2v4l-4 2-4-2z', '#000', '#0c0'], ['M3 9l4-2 4 2v5l-4 2-4-2z', '#000', '#00f'], ['M9 9l3-2 3 2v4l-3 2-3-2z', '#000', '#f00']],
  find: [['M.5 3.500h5v6h-5zM6.500 .5h8v8h-8z', '#5a6a90', '#dde'], ['M9 2v5M11 3v5M13 2v4M2 5v3', '#5a6a90', N], ['M10 5.500a3.500 3.500 0 100 7 3.500 3.500 0 000-7z', '#246', '#9ff'], ['M12 12l3 3.500', '#246', N]],
  money: [['M.5 1.500h15v13H.5z', '#000', '#fff'], ['M1 1h14v3H1z', N, '#000'], ['M1 6h5v2H1zM1 10h5v2H1zM1 13h5v2H1z', N, '#808000'], ['M13 6h-3v3h3v3h-4M11.500 5v8', '#000080', N]],
  sheetOff: [['M4.500 1.500h11v13h-11z', '#999', '#ddd'], ['M5 4.500h10M5 8.500h10M5 11.500h10M9.500 2v12M0 7.500h6M3 5L0 7.500 3 10', '#999', N]],
  sheet: [['M.5 1.500h15v13H.5z', '#000', '#ffff80'], ['M0 1h16v3H0z', N, '#000'], ['M5.500 4v10M9.500 4v10M1 7.500h14M1 10.500h14', '#000', N], ['M10 5h5v9h-5z', N, '#fff']],
  bars: [['M1.500 5v5M4.500 2v4M7.500 1v4M10.500 1v4M13.500 4v4', '#c00', N], ['M2.500 3v4M5.500 1v5M9 2v4M12 2v5', '#000080', N], ['M0 10.500h2l3 3.500 2-1 2-3 2 2 2 2h3', '#000', N], ['M0 14.500h3l3-4 3 0 4 3', '#a00', N], ['M15.500 1v14.500H1', '#aaa', N]],
  upDown: [['M4.500 6v8M2 11l2.500 3L7 11M3 11.500h3', '#800000', N], ['M10.500 12V4M8 7l2.500-3L13 7M9 6.500h3', '#000080', N], ['M15.500 1v14.500H3', '#aaa', N]],
  layers: [['M5.500 .5h10v10h-10z', '#000', '#fff'], ['M3.500 2.500h10v10h-10z', '#000', '#fff'], ['M.5 4.500h11v11H.5z', '#000', '#fff'], ['M2 11l2-3 2 2 4-4', '#00f', N], ['M4.500 11v4M3 13h3', '#c00', N], ['M8.500 10v5M7 12h3', '#000080', N]],
  handProps: [['M5.500 9.500h10v5h-10z', '#000080', '#fff'], ['M0 8.500h7M0 10.500h6', '#000', N], ['M3 4l5-3h7v3h-2l-2 4H1z', '#333', '#e8e8e8'], ['M4 6h6M6 4h5', '#555', N, 1], ['M5 12.500h8M7 7.500h7', '#000080', N]],
  handBox: [['M.5 7.500h11v8H.5z', '#000', '#fff'], ['M0 6h12v4H0z', N, '#000080'], ['M4 7l3-5 2-1h7v3h-3l-2 3-4 1z', '#000', '#ddd'], ['M12 1h4v3h-4z', N, '#000080']],
  calendar: [['M.5 2.500h14v12H.5z', '#000', '#fff'], ['M1 2h14v3H1z', N, '#0a0'], ['M3.500 0v4M6.500 0v4M9.500 0v4M12.500 0v4', '#000', N], ['M3 7l3 3M6 7l-3 3M3 12h2', '#f00', N], ['M11 6.500a4 4 0 100 8.500 4 4 0 000-8.500zM11 8v3h2', '#000', '#fff']],
  clockBars: [['M5 .5a4.500 4.500 0 100 9 4.500 4.500 0 000-9zM5 2.500v3h2', '#000', '#fff'], ['M11.500 4v7M9.500 6h2M14.500 2v9M14 9h2M5.500 10v4M8.500 11v5M3 13v2', '#000080', N]],
  blackChart: [['M.5 .5h15v15H.5z', '#f00', '#000'], ['M4.500 5v5M4 9.500h2M8.500 5v6M12.500 3v6M11 7.500h2', '#0f0', N]],
  ohlc: [['M3.500 3v11M1 13h3M4 5h3M9.500 1v11M7 10h3M10 3h3', '#000080', N], ['M4.500 3v11M10.500 1v11', '#000080', N], ['M15.500 1v14.500H2', '#aaa', N]],
  candles: [['M4 3v10M9.500 1v13', '#000080', N], ['M2 5h4v6H2z', '#000080', '#000080'], ['M8.500 3.500h3v8h-3z', '#000080', '#fff'], ['M15.500 1v14.500H2', '#aaa', N]],
  squeeze: [['M0 8.500h4M2 6l2.500 2.500L2 11M16 8.500h-4M14 6l-2.500 2.500L14 11', '#000', N], ['M6.500 2v9M10.500 5v9', '#00f', N], ['M8.500 1v14', '#888', N]],
  expand: [['M.5 2v10M15.500 5v10', '#00f', N], ['M2 8.500h4M5 6L2.500 8.500 5 11M14 8.500h-4M11 6l2.500 2.500L11 11', '#000', N]],
  zoomIn: [['M6.500 1a5 5 0 100 11 5 5 0 000-11z', '#000', '#9ff'], ['M4 6.500h5M6.500 4v5', '#000', N], ['M11 10l5 5M10 11l5 5', '#000080', N]],
  zoomOut: [['M6.500 1a5 5 0 100 11 5 5 0 000-11z', '#999', '#eee'], ['M4 6.500h5M11 10l5 5M10 11l5 5', '#999', N]],
  pointer: [['M5.500 1.500v12l3-3 2 5 2-1-2-4h4z', '#000', '#fff']],
  chartText: [['M0 1h14v11H0z', N, '#000'], ['M0 1h11v2H0z', N, '#00f'], ['M11 1h3v2h-3z', N, '#f00'], ['M1 9l3-2 2 2 3-3 2 1', '#0f0', N], ['M8 7h8v9H8z', N, '#f0f0f0'], ['M8 8.500h8M12 8v8M10 15.500h4M11.500 8v8', '#000', N]],
  tools: [['M2 15L12 3M3 15.500L13 4', '#000', N], ['M3 6l11 9M4 5l11 9', '#808000', N], ['M0 5l5-4 3 2-5 5z', '#000', '#404000'], ['M11 3l2-2 1 3 2 0-2 3-3-1z', '#000', '#333']],
  strategy: [['M0 4h7M3.500 .5v7', '#00f', N], ['M7.500 .5h8v9h-8z', '#000', '#ffff80'], ['M8 3.500h7M8 6.500h7M11.500 1v8', '#806000', N], ['M1.500 8.500h9v5h-9z', '#000080', '#ddd'], ['M0 14.500h8l4-3', '#000080', N]],
  noteOff: [['M2.500 .5h12v12h-2v3l-4-3h-6z', '#999', '#eee'], ['M4 3.500h3M8 3.500h5M4 5.500h3M8 5.500h5M4 7.500h3M8 7.500h5M4 9.500h8', '#999', N]],
  fork: [['M0 15L7 8M4 11V7l6-6M5 10h4l6-6', '#000', N]],
  vLines: [['M.5 1v14M4.500 1v14M7.500 1v14M10.500 1v14M15.500 1v14', '#000', N]],
  hLines: [['M0 1.500h16M0 6.500h16M0 10.500h16M0 15.500h16', '#000', N]],
  calc: [['M0 1.500h16M0 4.500h16', '#000', N], ['M4.500 5.500h8v10h-8z', '#000080', '#fff'], ['M5 6h7v2H5z', N, '#000080'], ['M6 10h5M6 12h5M6 14h5', '#000080', N]],
  fan: [['M1 13c1-9 11-9 13-4M4 13c1-5 6-5 7-2M1 14L14 3M7 13l3-3', '#000', N]],
  dots: [['M0 15h16', '#000', N], ['M1 14L14 1M3 14l12-6M5 14l10-3', '#000', N, 1]],
  ladder: [['M0 15l4-6 3 2V1M8 1.500h7M8 4.500h6M8 7.500h6M8 10.500h5M8 13.500h5', '#000', N]],
  levels: [['M0 2l5 6V1', '#000', N], ['M8.500 1v14M11.500 1v14M15.500 1v14M5.500 8v3', '#000', N]],
  gannFan: [['M0 15.500h16M0 15L11 1', '#000', N], ['M0 15l15-6M0 15l14-11', '#000', N]],
  hArrow: [['M1 8h14M4 5L1 8l3 3M12 5l3 3-3 3', '#000', N]],
  parallel: [['M0 11L9 2M3 13L13 3M6 15l9-9', '#000', N]],
  arcs: [['M1 14V7c1-8 13-8 14 0v7M1 11c2-3 4-3 5 0M6 11c1-3 3-3 4 0M10 11c2-3 4-3 5 0', '#000', N], ['M4 15v-2M8 15v-3M12 15v-2', '#000', N]],
  pencil: [['M0 15h9', '#000', N], ['M8 12l5-11 3 1-5 11-3 2z', '#000', '#cc0']],
  arc: [['M1 14C8 13 12 9 13 2', '#000', N]],
  redDown: [['M6 3h3v6h3l-4.500 6L3 9h3z', N, '#f00']],
  blueUp: [['M6 14h3V8h3L7.500 2 3 8h3z', N, '#00f']],
  ellipse: [['M8 2a7 6 0 100 12A7 6 0 008 2z', '#000', N]],
  rect: [['M1.500 1.500h13v13h-13z', '#000', N]],
};

const TOOLS_A = ['page', 'open', 'saveAll', 'mail', 'folder', '|', 'preview', 'print', '|', 'dataIn', 'dataOut', 'lock', 'dish', 'cubes', '|'];
const TOOLS_B = ['money', 'sheetOff', 'sheet', '|', 'bars', 'upDown', 'layers', '|', 'handProps', 'handBox', '|', 'calendar', 'clockBars',
  'blackChart', 'ohlc', 'candles', '|', 'squeeze', 'expand', '|', 'zoomIn', 'zoomOut', '|', 'pointer', 'chartText', '|', 'tools', '|',
  'strategy', '|', 'noteOff'];
const TOOLS_C = ['fork', 'vLines', 'hLines', 'calc', 'fan', 'dots', 'ladder', 'levels', 'gannFan', 'hArrow', 'parallel', 'arcs', 'pencil',
  '|', 'arc', 'redDown', 'blueUp', 'ellipse', 'rect', 'abc'];

/* ---------- styles ---------- */

const GlobalStyle = createGlobalStyle`
  * { box-sizing: border-box; }
  body {
    margin: 0;
    background: #f0f0f0;
    overflow-x: hidden;
    font-family: 'Open Sans', 'Noto Sans', sans-serif;
  }
  button { font: inherit; padding: 0; border: 0; background: none; color: inherit; }
  svg { display: block; }
`;

const Window = styled.div`
  display: flex;
  flex-direction: column;
  min-height: 100vh;
  overflow: hidden;
`;

const TitleBar = styled.header`
  height: 28px;
  display: flex;
  align-items: center;
  gap: 7px;
  padding-left: 1px;
  border-bottom: 1px solid #3b4a60;
  background:
    linear-gradient(to bottom, rgba(255, 255, 255, 0.15), rgba(255, 255, 255, 0) 50%, rgba(30, 60, 100, 0.25)),
    linear-gradient(to right, #9db9d6 0%, #bccfe4 10%, #c3d3e6 30%, #b4cfee 42%, #a4cdfa 50%, #a8d0fc 68%, #9cc8f5 76%, #a9d0f8 77%, #24456c 79%, #1e4468 86%, #27476e 100%);
`;

const Title = styled.h1`
  flex: 1;
  margin: 0;
  font-family: Roboto, sans-serif;
  font-size: 15px;
  font-weight: 400;
  line-height: 26px;
  white-space: pre;
  color: #000;
`;

const Caption = styled.div`
  display: flex;
  align-self: flex-start;
  margin-right: 4px;
  height: 25px;
  border: 1px solid #d8e4f0;
  border-top: 0;
  border-radius: 0 0 5px 5px;
  overflow: hidden;
`;

const CaptionButton = styled.button`
  width: ${(p) => (p.$close ? 62 : 36)}px;
  display: flex;
  align-items: center;
  justify-content: center;
  border-right: ${(p) => (p.$close ? 0 : 1)}px solid #cdd8e4;
  background: ${(p) => (p.$close
    ? 'linear-gradient(#e0a090, #cf6a50 45%, #b83a18 50%, #d4603a)'
    : 'linear-gradient(#a5b5c8, #7f93ab 45%, #4a6482 50%, #6a84a0)')};
`;

const MenuBar = styled.nav`
  height: 30px;
  display: flex;
  align-items: center;
  padding: 2px 0 0 7px;
  background: linear-gradient(#fff, #f4f6fc 30%, #d5dcee 35%, #dfe5f5);
  border-bottom: 2px solid #b4bac6;
`;

const MenuItem = styled.button`
  font-family: Roboto, sans-serif;
  font-size: 15px;
  line-height: 24px;
  margin-left: ${(p) => (p.$first ? 8 : 14)}px;
`;

const MdiButtons = styled.div`
  display: flex;
  gap: 2px;
  margin-left: auto;
  margin-right: 2px;
`;

const MdiButton = styled.button`
  width: 22px;
  height: 26px;
  flex: none;
  display: flex;
  align-items: center;
  justify-content: center;
  border: 1px solid #a9bccf;
  background: #dfeaf6;
`;

const Toolbar = styled.div`
  height: 32px;
  display: flex;
  align-items: center;
  padding-left: 23px;
  background: #f0f0f0;
  border-top: 1px solid #fff;
  border-bottom: 2px solid #77787a;
`;

const Grip = styled.span`
  width: 3px;
  height: 24px;
  margin-right: 4px;
  margin-left: ${(p) => p.$gap || 0}px;
  border-left: 3px dotted #bcbcbc;
`;

const ToolButton = styled.button`
  width: 23px;
  height: 24px;
  display: flex;
  flex: none;
  align-items: center;
  justify-content: center;
  font-family: 'Liberation Sans', Arial, sans-serif;
  font-size: 11px;
  background: ${(p) => (p.$on ? '#fafafa' : 'none')};
  box-shadow: ${(p) => (p.$on ? 'inset 1px 1px #909090' : 'none')};
`;

const Divider = styled.span`
  width: 8px;
  height: 22px;
  flex: none;
  background: linear-gradient(to right, transparent 4px, #a0a0a0 4px, #a0a0a0 5px, #fff 5px, #fff 6px, transparent 6px);
`;

const SymbolBox = styled.label`
  width: 136px;
  height: 23px;
  display: flex;
  align-items: center;
  background: #fff;
  border: 1px solid #e2e3ea;
`;

const SymbolInput = styled.input`
  width: 120px;
  border: 0;
  padding: 0 0 0 2px;
  outline: 0;
  background: none;
  font-family: 'Liberation Sans', Arial, sans-serif;
  font-size: 14px;
  &::placeholder { color: #808080; opacity: 1; }
`;

const FindSlot = styled.span`
  margin: 0 14px 0 5px;
`;

const ChartWindow = styled.main`
  position: relative;
  margin-right: 2px;
  background: #040608;
  box-shadow: inset 2px 0 #77787a;
  font-family: 'Liberation Sans', Arial, sans-serif;
`;

const ChartButtons = styled.div`
  position: absolute;
  z-index: 2;
  top: 8px;
  right: -7px;
  display: flex;
  gap: 1px;
`;

const Pane = styled.section`
  display: grid;
  grid-template-columns: 80px 1fr 77px;
`;

const Plot = styled.div`
  display: grid;
  min-width: 0;
  border-left: 1px solid #fff;
  border-right: 1px solid #fff;
  & > * { grid-area: 1 / 1; }
`;

const Drawing = styled.svg`
  width: 100%;
  height: ${(p) => p.$h}px;
  overflow: ${(p) => (p.$spill ? 'visible' : 'hidden')};
  position: relative;
  z-index: ${(p) => (p.$spill ? 1 : 0)};
  pointer-events: none;
`;

const Legend = styled.div`
  display: flex;
  align-self: start;
  height: 22px;
  min-width: 0;
  overflow: hidden;
  padding-left: 1px;
  font-size: 16px;
  line-height: 22px;
  white-space: pre;
`;

const LegendItem = styled.span`
  flex: 0 0 ${(p) => p.$w}px;
  color: ${(p) => p.$color};
`;

const AxisText = styled.text`
  font-size: 20px;
  fill: ${(p) => p.$color || '#fff'};
`;

const TimeAxis = styled.div`
  height: 29px;
  border-top: 1px solid #fff;
  border-bottom: 1px solid #fff;
`;

const ScrollRow = styled.div`
  height: 22px;
  display: flex;
  align-items: center;
  justify-content: space-between;
  padding: 0 9px 3px 8px;
  background: #ededed;
`;

const ScrollEnd = styled.div`
  display: flex;
  align-items: center;
  gap: 10px;
`;

const Thumb = styled.button`
  width: 18px;
  height: 18px;
  display: flex;
  align-items: center;
  justify-content: center;
  border: 1px solid #979797;
  border-radius: 2px;
  background: linear-gradient(to bottom, #f6f6f6, #d0d0d0);
`;

const TabRow = styled.div`
  height: 19px;
  display: flex;
  border-top: 1px solid #000;
  background: #f0f0f0;
  border-bottom: 1px solid #a0a0a0;
`;

const NavButton = styled.button`
  width: 17px;
  height: 16px;
  display: flex;
  align-items: center;
  justify-content: center;
  border-right: 1px solid #808080;
  border-bottom: 1px solid #808080;
`;

const Tab = styled.button`
  height: 16px;
  padding: 0 6px;
  font-family: 'Liberation Sans', Arial, sans-serif;
  font-size: 12px;
  font-weight: ${(p) => (p.$active ? 700 : 400)};
  line-height: 15px;
  white-space: nowrap;
  background: ${(p) => (p.$active ? '#fff' : 'none')};
  border-bottom: 1px solid #000;
`;

const StatusBar = styled.footer`
  height: 20px;
  display: flex;
  align-items: center;
  font-size: 14px;
  line-height: 18px;
  padding: 1px 0 0 2px;
  background: #f0eeec;
  border-bottom: 1px solid #8f9cba;
`;

const StatusText = styled.span`
  flex: 1;
`;

const StatusCell = styled.span`
  flex: 0 0 ${(p) => p.$w}px;
  padding-left: 3px;
  white-space: nowrap;
  color: ${(p) => p.$color || '#000'};
  border-left: 1px solid #dcdad8;
`;

/* ---------- chart helpers ---------- */

const barX = (k) => 1 + k * 4;
const parse = (text) => text.split(' ').map((p) => p.split(',').map(Number));
const project = (text, origin) => parse(text).map(([k, v]) => [barX(k), (v - origin) / 3]);

function linePath(points) {
  return 'M' + points.map(([x, y]) => `${x.toFixed(1)} ${y.toFixed(1)}`).join('L');
}

function smoothPath(points) {
  let d = `M${points[0][0]} ${points[0][1]}`;
  for (let i = 0; i < points.length - 1; i++) {
    const a = points[i - 1] || points[i];
    const b = points[i];
    const c = points[i + 1];
    const e = points[i + 2] || c;
    d += `C${[b[0] + (c[0] - a[0]) / 6, b[1] + (c[1] - a[1]) / 6, c[0] - (e[0] - b[0]) / 6, c[1] - (e[1] - b[1]) / 6, c[0], c[1]]
      .map((n) => n.toFixed(1)).join(' ')}`;
  }
  return d;
}

// level of a series on every whole bar it covers
function sample(text) {
  const pts = parse(text);
  const out = [];
  let i = 0;
  for (let k = Math.ceil(pts[0][0]); k <= pts[pts.length - 1][0]; k++) {
    while (i < pts.length - 2 && pts[i + 1][0] < k) i++;
    const [k0, v0] = pts[i];
    const [k1, v1] = pts[i + 1];
    out.push([k, v0 + ((v1 - v0) * (k - k0)) / (k1 - k0)]);
  }
  return out;
}

const Curve = ({ data, origin = 0, color, dash, sharp, clip }) => (
  <path
    d={sharp ? linePath(project(data, origin)) : smoothPath(project(data, origin))}
    fill="none"
    stroke={color}
    strokeDasharray={dash}
    clipPath={clip}
    shapeRendering="crispEdges"
  />
);

const Level = ({ at, origin = 0, color, dash, to = barX(LAST_BAR) }) => {
  const y = Math.floor((at - origin) / 3) + 0.5;
  return <line x1="0" x2={to} y1={y} y2={y} stroke={color} strokeDasharray={dash} />;
};

const DayLines = ({ from, to }) => DAYS.map((k) => (
  <line key={k} x1={barX(k) + 0.5} x2={barX(k) + 0.5} y1={from} y2={to} stroke="#484848" strokeDasharray="9 3 4 3" />
));

const Mark = ({ x, top, up, label, labelY, flagY }) => {
  const c = up ? '#0f0' : '#f00';
  const y = top / 3;
  return (
    <g>
      <path
        d={up ? `M${x} ${y}l4 6h-3v7h-3v-7h-3z` : `M${x - 1} ${y}h3v9h3l-4 7-4-7h2z`}
        fill={c}
      />
      <path d={`M${x - 6} ${flagY / 3 - 3}l5 3-5 3z`} fill={c} />
      <text x={x} y={labelY / 3 + 6} fontSize="16" fill="#fff" textAnchor="middle">{label}</text>
    </g>
  );
};

const Axis = ({ ticks, tags = [], origin = 0, height, right, divided }) => (
  <Drawing $h={height}>
    {divided && <rect x={right ? 0 : 2} y="0" width="100" height="1" fill="#fff" />}
    {ticks.map(([v, label]) => {
      const y = Math.floor((v - origin) / 3) + 0.5;
      const text = !right && label === '-150.00' ? '-150....' : label;
      return (
        <g key={v}>
          <line x1={right ? 0 : 72} x2={right ? 5 : 80} y1={y} y2={y} stroke="#fff" />
          {label && <AxisText x={right ? 7 : 70} y={y + 7} textAnchor={right ? 'start' : 'end'}>{text}</AxisText>}
        </g>
      );
    })}
    {tags.map(([v, label, color]) => (
      <g key={v}>
        <rect x="0" y={Math.round((v - origin) / 3)} width="78" height="23" fill={color} />
        {label && <AxisText $color="#000" x="8" y={Math.round((v - origin) / 3) + 19}>{label}</AxisText>}
      </g>
    ))}
  </Drawing>
);

const Header = ({ items }) => (
  <Legend>
    {items.map(([text, color, w], i) => <LegendItem key={i} $color={color} $w={w}>{text}</LegendItem>)}
  </Legend>
);

/* ---------- panes ---------- */

const PricePane = () => (
  <Pane>
    <Axis ticks={PRICE_TICKS} height={468} />
    <Plot>
      <Drawing $h={468} $spill>
        <DayLines from={19} to={465} />
        <Level at={127} color="#808000" dash="4 3" to="100%" />
        <Level at={1327} color="#808000" dash="4 3" to="100%" />
        <Level at={835} color="#008080" />
        <svg x="100%" overflow="visible">
          <AxisText $color="#808000" x="-1" y="38" textAnchor="end">3771.000</AxisText>
          <AxisText $color="#808000" x="-1" y="438" textAnchor="end">3492.000</AxisText>
        </svg>
        <Curve data={BAND_UP} color="#a6caf0" dash="9 3 3 3 3 3" />
        <Curve data={BAND_DOWN} color="#a6caf0" dash="9 3 3 3 3 3" />
        <Curve data={VELO_FAST} color="#008080" sharp />
        <Curve data={VELO_MID} color="#f00" dash="3 4" />
        <Curve data={VELO_SLOW} color="#00f" />
        <path d={linePath(CLOSE.map((v, k) => [barX(k), v / 3]))} fill="none" stroke="#6a6aff" />
        {HILOW.map(([color, data]) => sample(data).map(([k, v]) => (
          <rect key={`${color}${k}`} x={barX(k) - 1} y={Math.round(v / 3) - 2} width="3" height="4" fill={color} />
        )))}
        {CLOSE.map((v, k) => <rect key={k} x={barX(k) - 2} y={Math.round(v / 3) - 1} width="4" height="3" fill="#0ff" />)}
        <Mark x={45} top={393} label="-1" labelY={346} flagY={488} />
        <Mark x={349} top={380} label="-1" labelY={334} flagY={467} />
        <Mark x={605} top={360} label="-1" labelY={314} flagY={472} />
        <Mark x={1473} top={1113} label="-1" labelY={1067} flagY={1181} />
        <Mark x={114} top={435} up label="1" labelY={508} flagY={409} />
        <Mark x={422} top={255} up label="1" labelY={328} flagY={237} />
        <Mark x={1254} top={1107} up label="1" labelY={1180} flagY={1040} />
        <Mark x={1530} top={1002} up label="1" labelY={1074} flagY={933} />
        <path d="M1393 312h56v1h112v1h56v1h56v1h56v1h57v1h33" fill="none" stroke="#ff0" strokeWidth="2" shapeRendering="crispEdges" />
      </Drawing>
      <Header items={HEADER} />
    </Plot>
    <Axis ticks={PRICE_TICKS.filter(([, t]) => t !== '3550')} tags={PRICE_TAGS} height={468} right />
  </Pane>
);

const LeoPane = () => {
  const o = 24;
  const cycles = Array.from({ length: 13 }, (_, i) => barX(26 + 32 * i) + 0.5);
  return (
    <Pane>
      <Axis ticks={LEO_TICKS} origin={o} height={216} divided />
      <Plot>
        <Drawing $h={216}>
          <DayLines from={19} to={213} />
          {cycles.map((x) => <line key={x} x1={x} x2={x} y1="24" y2="210" stroke="#006a6a" strokeDasharray="18 6" />)}
          <Level at={136} origin={o} color="#f00" />
          <Level at={544} origin={o} color="#f00" />
          <Level at={238} origin={o} color="#6b6b00" />
          <Level at={442} origin={o} color="#6b6b00" />
          <Level at={301} origin={o} color="#800080" dash="4 3" />
          <Level at={340} origin={o} color="#00f" dash="4 3" />
          <Curve data={MACD_FAST} origin={o} color="#008080" />
          <Curve data={MACD_MID} origin={o} color="#ff0" dash="4 3" />
          <Curve data={MACD_SLOW} origin={o} color="#ff0" />
          <Curve data={LEO} origin={o} color="#0ff" sharp />
        </Drawing>
        <Header items={LEO_HEADER} />
      </Plot>
      <Axis ticks={LEO_TICKS} tags={LEO_TAGS} origin={o} height={216} right divided />
    </Pane>
  );
};

const CciPane = () => {
  const o = 672;
  const dots = [[28, 1302, '#f00'], [98, 1272, '#f00'], [142, 747, '#0ff'], [193, 1299, '#f00'], [234, 747, '#0ff'], [332, 747, '#0ff'], [360, 759, '#0ff']];
  return (
    <Pane>
      <Axis ticks={CCI_TICKS} origin={o} height={216} divided />
      <Plot>
        <Drawing $h={216}>
          <clipPath id="over"><rect x="0" y="0" width="1600" height="48" /></clipPath>
          <clipPath id="under"><rect x="0" y="173" width="1600" height="60" /></clipPath>
          <DayLines from={19} to={213} />
          {sample(CCI).map(([k, v]) => (
            <line key={k} x1={barX(k) + 0.5} x2={barX(k) + 0.5} y1={110} y2={(v - o) / 3} stroke="#404040" />
          ))}
          <Level at={817} origin={o} color="#808080" />
          <Level at={1189} origin={o} color="#808080" />
          <Level at={1000} origin={o} color="#008080" />
          <Curve data={STOC} origin={o} color="#c86400" dash="4 3" sharp />
          <Curve data={CYCLE_FAST} origin={o} color="#008080" sharp />
          <Curve data={CYCLE_MID} origin={o} color="#f00" dash="4 4" />
          <Curve data={CYCLE_SLOW} origin={o} color="#00f" />
          <Curve data={CCI} origin={o} color="#b0b0b0" sharp />
          <Curve data={CCI} origin={o} color="#f00" sharp clip="url(#over)" />
          <Curve data={CCI} origin={o} color="#0ff" sharp clip="url(#under)" />
          {dots.map(([k, v, c]) => <circle key={k} cx={barX(k)} cy={(v - o) / 3} r="3" fill={c} />)}
        </Drawing>
        <Header items={CCI_HEADER} />
      </Plot>
      <Axis ticks={CCI_TICKS} tags={CCI_TAGS} origin={o} height={216} right divided />
    </Pane>
  );
};

const Times = () => (
  <TimeAxis>
    <Drawing $h={27}>
      {TIMES.map((t, i) => {
        const x = 134 + 68 * i;
        const day = i % 4 === 1;
        return (
          <g key={i}>
            <line x1={x + 0.5} x2={x + 0.5} y1="0" y2={day ? 10 : 4} stroke="#fff" />
            <AxisText x={x + (day ? 7 : 2)} y="23">{t}</AxisText>
          </g>
        );
      })}
    </Drawing>
  </TimeAxis>
);

/* ---------- window chrome ---------- */

const Icon = ({ name }) => (
  <svg width="16" height="16" viewBox="0 0 16 16">
    {ICONS[name].map(([d, stroke, fill, dotted], i) => (
      <path key={i} d={d} stroke={stroke} fill={fill} strokeDasharray={dotted ? '1 1' : undefined} />
    ))}
  </svg>
);

const Tools = ({ items }) => items.map((name, i) => {
  if (name === '|') return <Divider key={i} />;
  return (
    <ToolButton key={i} type="button" aria-label={name} $on={name === 'pointer'}>
      {name === 'abc' ? 'abc' : <Icon name={name} />}
    </ToolButton>
  );
});

const Triangle = ({ left, color = '#000' }) => (
  <svg width="6" height="10" viewBox="0 0 6 10"><path d={left ? 'M6 0v10L1 5z' : 'M0 0v10l5-5z'} fill={color} /></svg>
);

const MdiSet = () => (
  <>
    <MdiButton type="button" aria-label="Minimize">
      <svg width="8" height="8"><path d="M1 6h6" stroke="#6d7f92" strokeWidth="2" /></svg>
    </MdiButton>
    <MdiButton type="button" aria-label="Restore">
      <svg width="9" height="9" fill="none" stroke="#6d7f92"><path d="M3.500 3V1.500h5v4H6M3 1.500h6" /><path d="M.5 4.500h5v4h-5zM0 4h6" /></svg>
    </MdiButton>
    <MdiButton type="button" aria-label="Close">
      <svg width="8" height="8"><path d="M1 1l6 6M7 1L1 7" stroke="#6d7f92" strokeWidth="2" /></svg>
    </MdiButton>
  </>
);

const Slant = ({ first, last, afterActive }) => (
  <svg width="9" height="16" viewBox="0 0 9 16" fill="none" stroke="#000">
    {afterActive && <path d="M0 16L5 0H0z" fill="#fff" stroke="none" />}
    {!last && <path d={afterActive ? 'M5 8l3 7.500h1' : 'M1 0l7 15.500h1'} />}
    {!first && <path d={afterActive || last ? 'M0 15.500h1L7 0' : 'M0 15.500h1L4 8'} />}
  </svg>
);

const App = () => (
  <Window>
    <GlobalStyle />
    <TitleBar>
      <svg width="17" height="24" viewBox="0 0 17 24">
        <path d="M1 19C0 8 5 2 10 2c5 1 7 6 6 12l-3 6c1-8 0-12-3-12-4 0-5 6-6 14z" fill="#1464e0" />
        <path d="M4 16c0-7 3-11 6-11 2 0 4 2 4 7-2-4-5-4-7 0z" fill="#48b0f8" />
        <path d="M9 4c4 0 6 5 5 10" stroke="#0a30a0" fill="none" strokeWidth="2" />
      </svg>
      <Title>TradeStation 8.1 - STOX_FIB - STOXX giornaliero - [Chart Analysis - GS:STOXX50-DT  8 min  [EUREX] STOXX FUTURES]</Title>
      <Caption>
        <CaptionButton type="button" aria-label="Minimize window">
          <svg width="15" height="14"><path d="M.5 8.500h14v4H.5z" fill="#fff" stroke="#45566a" /></svg>
        </CaptionButton>
        <CaptionButton type="button" aria-label="Restore window">
          <svg width="19" height="17" stroke="#45566a" fill="#fff"><path d="M5.500 .5h12v12h-12z" /><path d="M1.500 3.500h12v13h-12z" /><path d="M5.500 8.500h4v4h-4z" fill="#8294a8" /></svg>
        </CaptionButton>
        <CaptionButton type="button" aria-label="Close window" $close>
          <svg width="18" height="16"><path d="M1 1h5l3 4 3-4h5l-5 7 5 7h-5l-3-4-3 4H1l5-7z" fill="#fff" stroke="#5a3a3a" /></svg>
        </CaptionButton>
      </Caption>
    </TitleBar>

    <MenuBar>
      <svg width="19" height="17" viewBox="0 0 19 17">
        <path d="M0 0h19v17H0z" fill="#000" />
        <path d="M0 0h19v2H0z" fill="#00f" />
        <path d="M1 9l3-2 2 1 2-4 2 3 3-3 2 2 2-3" stroke="#0c0" fill="none" />
        <path d="M1 14l3-1 3 1 3-1 4 1 4-1M1 11h17" stroke="#a00" fill="none" />
      </svg>
      {MENUS.map((m, i) => <MenuItem key={m} type="button" $first={i === 0}>{m}</MenuItem>)}
      <MdiButtons><MdiSet /></MdiButtons>
    </MenuBar>

    <Toolbar>
      <Grip />
      <Tools items={TOOLS_A} />
      <SymbolBox>
        <SymbolInput aria-label="Symbol" placeholder="Type a symbol/co" />
        <svg width="10" height="6"><path d="M0 0h10L5 6z" /></svg>
      </SymbolBox>
      <ToolButton type="button" aria-label="Go"><Triangle /></ToolButton>
      <FindSlot><ToolButton type="button" aria-label="Find symbol"><Icon name="find" /></ToolButton></FindSlot>
      <Grip />
      <Tools items={TOOLS_B} />
      <Grip $gap={26} />
      <Tools items={TOOLS_C} />
    </Toolbar>

    <ChartWindow>
      <ChartButtons><MdiSet /></ChartButtons>
      <PricePane />
      <LeoPane />
      <CciPane />
      <Times />
    </ChartWindow>

    <ScrollRow>
      <Triangle left color="#333" />
      <ScrollEnd>
        <Thumb type="button" aria-label="Scroll"><svg width="9" height="9"><path d="M1 0v9M4.500 0v9M8 0v9" stroke="#666" /></svg></Thumb>
        <Triangle color="#555" />
      </ScrollEnd>
    </ScrollRow>

    <TabRow>
      <NavButton type="button" aria-label="First"><svg width="8" height="8"><path d="M1 0v8M7 0v8L3 4z" stroke="#666" fill="#666" /></svg></NavButton>
      <NavButton type="button" aria-label="Previous"><Triangle left color="#666" /></NavButton>
      <NavButton type="button" aria-label="Next"><Triangle color="#666" /></NavButton>
      <NavButton type="button" aria-label="Last"><svg width="8" height="8"><path d="M7 0v8M1 0v8l4-4z" stroke="#666" fill="#666" /></svg></NavButton>
      {TABS.map((t, i) => (
        <React.Fragment key={t}>
          <Slant first={i === 0} afterActive={i === 15} />
          <Tab type="button" $active={i === 14}>{t}</Tab>
        </React.Fragment>
      ))}
      <Slant last />
    </TabRow>

    <StatusBar>
      <StatusText>For Help, press F1</StatusText>
      {STATUS.map(([t, w]) => <StatusCell key={t} $w={w}>{t}</StatusCell>)}
      <StatusCell $w={88} $color="#0a8a0a">ORDER BAR</StatusCell>
      <StatusCell $w={68} $color="#0a8a0a">MACROS</StatusCell>
      <StatusCell $w={19}>
        <svg width="12" height="12"><circle cx="6" cy="6" r="5" fill="#e00" stroke="#500" /><circle cx="4" cy="4" r="1" fill="#fff" /></svg>
      </StatusCell>
      <StatusCell $w={124}>11/05/2022 11:27</StatusCell>
    </StatusBar>
  </Window>
);

export default App;
